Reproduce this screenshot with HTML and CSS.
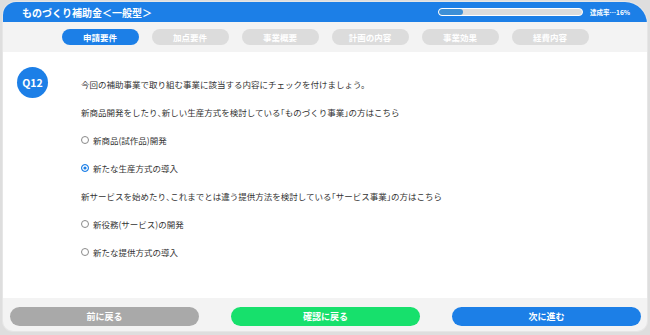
FILE: index.html
```html
<!DOCTYPE html>
<html lang="ja">
<head>
  <meta charset="UTF-8">
  <meta name="viewport" content="width=device-width, initial-scale=1.0">
  <title>ものづくり補助金 診断</title>
  <link rel="stylesheet" href="styles.css">
</head>
<body>
  <div class="frame">
    <!-- Header -->
    <div class="topbar">
      <h1>ものづくり補助金＜一般型＞</h1>
      <div class="progress">
        <div class="track"><div class="fill" style="width: 17%;"></div></div>
        <span class="rate">達成率…16%</span>
      </div>
    </div>

    <!-- Steps -->
    <div class="tabs">
      <span class="tab active">申請要件</span>
      <span class="tab">加点要件</span>
      <span class="tab">事業概要</span>
      <span class="tab">計画の内容</span>
      <span class="tab">事業効果</span>
      <span class="tab">経費内容</span>
    </div>

    <!-- Question -->
    <div class="content">
      <div class="qnum">Q12</div>
      <div class="question">
        <p>今回の補助事業で取り組む事業に該当する内容にチェックを付けましょう。</p>
        <p>新商品開発をしたり<span class="half">、</span>新しい生産方式を検討している<span class="half">「</span>ものづくり事業<span class="half">」</span>の方はこちら</p>
        <label class="option"><span class="radio"></span>新商品(試作品)開発</label>
        <label class="option"><span class="radio checked"></span>新たな生産方式の導入</label>
        <p>新サービスを始めたり<span class="half">、</span>これまでとは違う提供方法を検討している<span class="half">「</span>サービス事業<span class="half">」</span>の方はこちら</p>
        <label class="option"><span class="radio"></span>新役務(サービス)の開発</label>
        <label class="option"><span class="radio"></span>新たな提供方式の導入</label>
      </div>
    </div>

    <!-- Footer buttons -->
    <div class="actions">
      <a class="btn back" href="#">前に戻る</a>
      <a class="btn confirm" href="#">確認に戻る</a>
      <a class="btn next" href="#">次に進む</a>
    </div>
  </div>
</body>
</html>
```

FILE: styles.css
```css
/* Global */
* {
  margin: 0;
  padding: 0;
  box-sizing: border-box;
}

body {
  font-family: "Noto Sans CJK JP", "Noto Sans", sans-serif;
  background-color: #dedede;
  color: #333333;
  width: 650px;
  height: 335px;
  overflow: hidden;
}

/* Frame */
.frame {
  width: 644px;
  height: 329px;
  margin: 2px 0 0 3px;
  background: #f3f3f3;
  border-radius: 13px 22px 10px 10px;
  overflow: hidden;
  display: flex;
  flex-direction: column;
  box-shadow: 0 0 0 1px #e6e6e6;
}

/* Header */
.topbar {
  height: 20px;
  background: #1c7fe7;
  display: flex;
  align-items: center;
  justify-content: space-between;
  padding: 0 17px 0 19px;
}

.topbar h1 {
  font-size: 10px;
  font-weight: bold;
  color: #ffffff;
}

.progress {
  display: flex;
  align-items: center;
  gap: 7px;
}

.track {
  width: 145px;
  height: 8px;
  border: 1.5px solid #ffffff;
  border-radius: 4px;
  background: #dcdcdc;
  overflow: hidden;
}

.fill {
  height: 100%;
  background: #3d8fd6;
  border-radius: 3px;
}

.rate {
  font-size: 6.5px;
  font-weight: bold;
  color: #ffffff;
}

/* Steps */
.tabs {
  height: 30px;
  display: flex;
  justify-content: center;
  align-items: center;
  gap: 13px;
}

.tab {
  width: 77px;
  height: 16px;
  border-radius: 8px;
  background: #dcdcdc;
  color: #ffffff;
  font-size: 8.5px;
  font-weight: bold;
  display: flex;
  justify-content: center;
  align-items: center;
}

.tab.active {
  background: #1c7fe7;
}

/* Question */
.content {
  height: 246px;
  background: #ffffff;
  display: flex;
  gap: 33px;
  padding: 15px 14px;
}

.qnum {
  width: 31px;
  height: 31px;
  flex-shrink: 0;
  border-radius: 50%;
  background: #1c7fe7;
  color: #ffffff;
  font-size: 10.5px;
  font-weight: bold;
  display: flex;
  justify-content: center;
  align-items: center;
}

.question {
  margin-top: 3px;
  font-size: 8.5px;
  color: #333333;
}

.question p,
.option {
  height: 28px;
  display: flex;
  align-items: center;
}

.half {
  font-feature-settings: "halt";
}

.radio {
  width: 8px;
  height: 8px;
  border: 1px solid #8a8a8a;
  border-radius: 50%;
  margin-right: 4px;
  background: #ffffff;
}

.radio.checked {
  border-color: #1c7fe7;
  background: #1c7fe7;
  box-shadow: inset 0 0 0 1.4px #ffffff;
}

/* Footer buttons */
.actions {
  flex: 1;
  display: flex;
  justify-content: space-between;
  align-items: flex-start;
  padding: 9px 6px 0 7px;
}

.btn {
  width: 189px;
  height: 19px;
  border-radius: 10px;
  color: #ffffff;
  font-size: 9px;
  font-weight: bold;
  text-decoration: none;
  display: flex;
  justify-content: center;
  align-items: center;
}

.btn.back {
  background: #a9a9a9;
}

.btn.confirm {
  background: #17e06c;
}

.btn.next {
  background: #1c7fe7;
}
```
